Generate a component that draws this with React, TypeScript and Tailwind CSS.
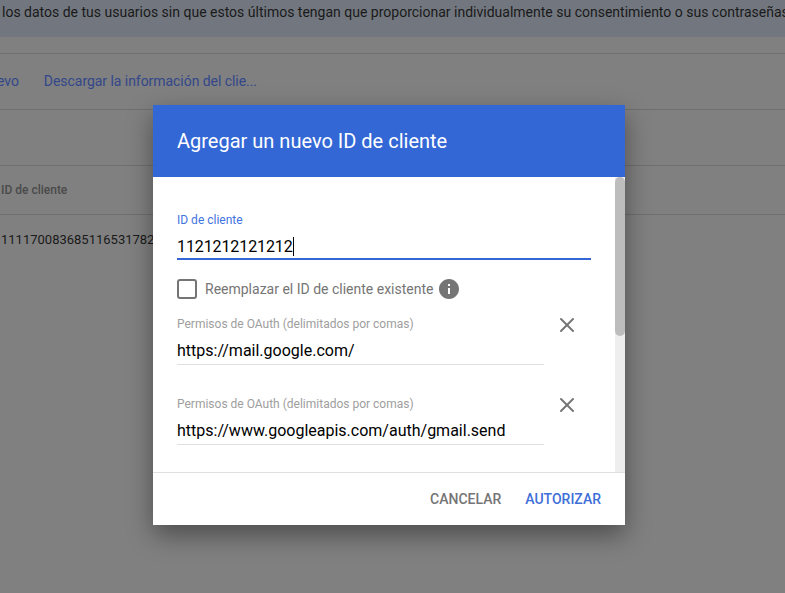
import { X } from 'lucide-react';

const roboto = "font-['Roboto',sans-serif]";

function ScopeRow({ value }: { value: string }) {
  return (
    <div className="flex h-[80px] items-start">
      <div className="w-[367px]">
        <div className="h-[15px] text-[12px] leading-[15px] text-[#9e9e9e]">
          Permisos de OAuth (delimitados por comas)
        </div>
        <div className="mt-[7px] h-[26px] border-b border-[#e0e0e0] text-[16px] leading-[24px] text-black">
          {value}
        </div>
      </div>
      <button className="ml-[11px] -mt-[4px] flex h-[24px] w-[24px] items-center justify-center text-[#757575]">
        <X size={24} strokeWidth={2} />
      </button>
    </div>
  );
}

export default function App() {
  return (
    <div className={`relative h-[593px] w-[785px] overflow-hidden bg-[#808080] ${roboto}`}>
      {/* Page behind the scrim */}
      <div className="h-[37px] overflow-hidden whitespace-nowrap bg-[#72777f] pl-[2px] pt-[3px] text-[14px] leading-[18px] text-[#1a1a1a]">
        los datos de tus usuarios sin que estos últimos tengan que proporcionar individualmente su consentimiento o sus contraseñas.
      </div>
      <div className="h-[17px] border-b border-[#6f6f6f]" />
      <div className="flex h-[56px] items-center gap-[25px] whitespace-nowrap border-b border-[#6f6f6f] text-[14px] tracking-[-0.05px] text-[#33478a]">
        <span className="-ml-[3px]">evo</span>
        <span>Descargar la información del clie...</span>
      </div>
      <div className="h-[56px] border-b border-[#6f6f6f]" />
      <div className="flex h-[49px] items-center border-b border-[#6f6f6f] pl-[1px] text-[12px] font-medium text-[#4a4a4a]">
        ID de cliente
      </div>
      <div className="whitespace-nowrap pl-[1px] pt-[16px] text-[13px] leading-[18px] text-[#1a1a1a]">
        11117008368511653178222
      </div>

      {/* Dialog */}
      <div className="absolute left-[153px] top-[105px] flex h-[420px] w-[472px] flex-col bg-white shadow-[0_10px_24px_rgba(0,0,0,0.4)]">
        <div className="flex h-[72px] shrink-0 items-center bg-[#3367d6] pl-[24px] text-[20px] text-white">
          Agregar un nuevo ID de cliente
        </div>
        <div className="flex min-h-0 flex-1">
          <div className="flex-1 overflow-hidden pl-[24px] pt-[36px]">
            <div className="h-[15px] text-[12px] leading-[15px] text-[#3f73e0]">ID de cliente</div>
            <div className="mt-[6px] h-[26px] w-[414px] border-b-2 border-[#3367d6] text-[16px] leading-[26px] tracking-[-0.1px] text-black">
              <span className="border-r border-black">1121212121212</span>
            </div>
            <div className="mt-[19px] flex h-[20px] items-center">
              <div className="h-[20px] w-[20px] rounded-[3px] border-2 border-[#757575]" />
              <span className="ml-[8px] text-[14px] text-[#757575]">Reemplazar el ID de cliente existente</span>
              <svg viewBox="0 0 24 24" className="ml-[4px] h-[24px] w-[24px] fill-[#757575]">
                <path d="M12 2C6.48 2 2 6.48 2 12s4.48 10 10 10 10-4.48 10-10S17.52 2 12 2zm1 15h-2v-6h2v6zm0-8h-2V7h2v2z" />
              </svg>
            </div>
            <div className="mt-[18px]">
              <ScopeRow value="https://mail.google.com/" />
              <ScopeRow value="https://www.googleapis.com/auth/gmail.send" />
            </div>
          </div>
          {/* Scrollbar */}
          <div className="w-[10px] shrink-0 bg-[#eeeeee]">
            <div className="h-[159px] rounded-[5px] bg-[#bdbdbd]" />
          </div>
        </div>
        <div className="flex h-[53px] shrink-0 items-center justify-end gap-[24px] border-t border-[#e0e0e0] pr-[24px] text-[14px] font-medium">
          <span className="text-[#757575]">CANCELAR</span>
          <span className="text-[#3f6fd8]">AUTORIZAR</span>
        </div>
      </div>
    </div>
  );
}
